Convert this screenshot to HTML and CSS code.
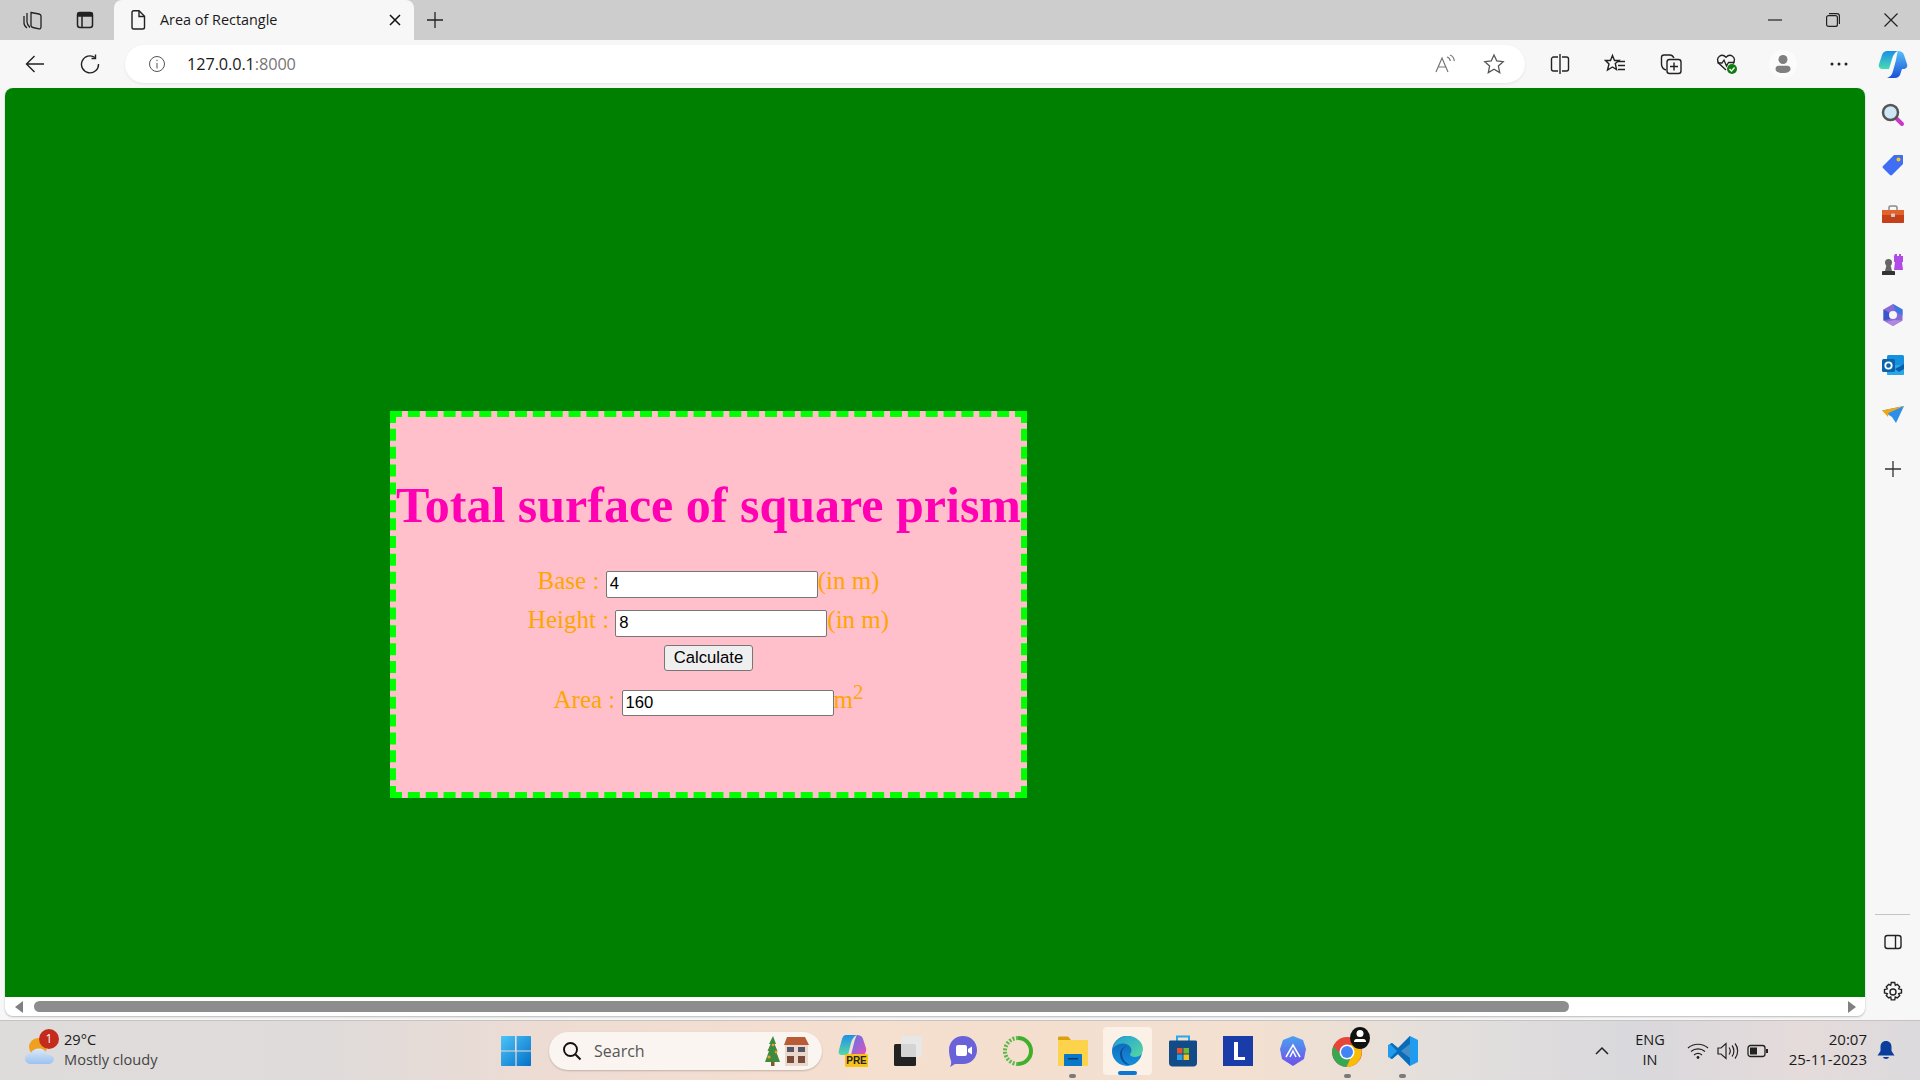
FILE: index.html
```html
<!DOCTYPE html>
<html lang="en">
<head>
    <meta charset="UTF-8">
    <title>Area of Rectangle</title>
    <link rel="stylesheet" href="styles.css">
</head>
<body>

    <!-- tab strip -->
    <div class="tabstrip">
        <span class="strip-btn first">
            <svg width="22" height="22" viewBox="0 0 22 22" fill="none" stroke="#222" stroke-width="1.3"><path d="M2 7v7c0 2.500 1.500 4 3 5"/><path d="M5 4v9c0 2 1.500 4 3 5.500"/><path d="M9 3.500l8 1.500c1 .2 2 1 2 2v11c0 1.300-1 2-2 1.800l-6-1.300c-1-.2-2-1-2-2z"/></svg>
        </span>
        <span class="strip-btn">
            <svg width="20" height="20" viewBox="0 0 20 20" fill="none" stroke="#222" stroke-width="1.5"><rect x="2.500" y="2.500" width="15" height="15" rx="2.500"/><path d="M3 3.500h14v2.500H3z" fill="#222"/><path d="M7 6v11"/></svg>
        </span>
        <div class="tab">
            <svg width="18" height="22" viewBox="0 0 18 22" fill="none" stroke="#222" stroke-width="1.4"><path d="M3 3.500c0-1 .8-1.800 1.800-1.800H10l5.500 5.500v11c0 1-.8 1.800-1.800 1.800H4.800C3.800 20 3 19.200 3 18.200z"/><path d="M10 2v5.500h5.500"/></svg>
            <span class="tab-title">Area of Rectangle</span>
            <svg class="tab-close" width="12" height="12" viewBox="0 0 12 12" stroke="#111" stroke-width="1.500"><path d="M1 1l10 10M11 1L1 11"/></svg>
        </div>
        <svg class="new-tab" width="18" height="18" viewBox="0 0 18 18" stroke="#222" stroke-width="1.300"><path d="M9 1v16M1 9h16"/></svg>
        <div class="window-btns">
            <svg width="14" height="14" viewBox="0 0 14 14" stroke="#222" stroke-width="1.200"><path d="M0 7h14"/></svg>
            <svg width="14" height="14" viewBox="0 0 14 14" fill="none" stroke="#222" stroke-width="1.200"><rect x=".6" y="2.600" width="10.800" height="10.800" rx="2"/><path d="M3 .6h8c1.400 0 2.400 1 2.400 2.400v8"/></svg>
            <svg width="14" height="14" viewBox="0 0 14 14" stroke="#222" stroke-width="1.200"><path d="M.5.5l13 13M13.500.5l-13 13"/></svg>
        </div>
    </div>

    <!-- address bar row -->
    <div class="toolbar">
        <svg class="tool-back" width="20" height="20" viewBox="0 0 20 20" fill="none" stroke="#222" stroke-width="1.400"><path d="M19 10H1.500M9.500 2l-8 8 8 8"/></svg>
        <svg class="tool-reload" width="20" height="20" viewBox="0 0 20 20" fill="none" stroke="#222" stroke-width="1.400"><path d="M15 3.500A8.500 8.500 0 1 0 18.500 10"/><path d="M15.500.5v4h-4"/></svg>
        <div class="address">
            <svg width="18" height="18" viewBox="0 0 18 18" fill="none" stroke="#555" stroke-width="1"><circle cx="9" cy="9" r="7.500"/><path d="M9 8v5.500M9 4.800v1.400"/></svg>
            <span class="url">127.0.0.1<span class="port">:8000</span></span>
            <svg class="read-aloud" width="22" height="20" viewBox="0 0 22 20" fill="none" stroke="#777" stroke-width="1.200"><path d="M1 18L7 4l6 14M3.200 13h7.600"/><path d="M12 3c2 .5 3 2 3.300 4M15 1c2.500 1 4 3 4.300 6"/></svg>
            <svg class="addr-star" width="22" height="22" viewBox="0 0 22 22" fill="none" stroke="#555" stroke-width="1.300"><path d="M11 2l2.800 6 6.400.7-4.800 4.400 1.300 6.500L11 16.300l-5.700 3.300 1.300-6.500L1.800 8.700 8.200 8z"/></svg>
        </div>
        <div class="tool-icons">
            <svg width="20" height="22" viewBox="0 0 20 22" fill="none" stroke="#222" stroke-width="1.400"><path d="M8 4H3.500C2.500 4 1.500 5 1.500 6v10c0 1 1 2 2 2H8M12 4h4.500c1 0 2 1 2 2v10c0 1-1 2-2 2H12M10 1v20"/></svg>
            <svg width="22" height="22" viewBox="0 0 22 22" fill="none" stroke="#222" stroke-width="1.400"><path d="M8.500 2.500l2 5H15l-3.700 3 1.200 6-4-2.500-5 3 1.500-6L1.500 7.500H6.500z"/><path d="M14 8.500h7M14 12.500h7M14 16.500h7"/></svg>
            <svg width="22" height="22" viewBox="0 0 22 22" fill="none" stroke="#222" stroke-width="1.400"><path d="M6 17C3 16 1.500 14 1.500 11V4.500c0-1.500 1-2.500 2.500-2.500h6c2 0 3 1 4 3"/><rect x="7" y="6.500" width="14" height="14" rx="2.500"/><path d="M14 9.500v8M10 13.500h8"/></svg>
            <svg width="22" height="22" viewBox="0 0 22 22"><path d="M10 17L3 10.500C1 8 1 5 3.500 3.200c2-1.400 4.500-1 6.500 1 2-2 4.500-2.400 6.500-1C19 5 19 8 17 10.500" fill="none" stroke="#222" stroke-width="1.400"/><path d="M1.500 10H6l2-3 2.500 6 2-3.500h6" fill="none" stroke="#222" stroke-width="1.300"/><circle cx="16" cy="16" r="5" fill="#107c10"/><path d="M13.500 16l2 2 3-3.500" fill="none" stroke="#fff" stroke-width="1.300"/></svg>
            <span class="profile">
                <svg width="20" height="20" viewBox="0 0 20 20" fill="#7f7f7f"><circle cx="10" cy="5.500" r="4.500"/><path d="M2.500 15c0-2 1.500-3.200 3-3.200h9c1.500 0 3 1.200 3 3.200 0 2.500-3 4-7.500 4s-7.500-1.500-7.500-4z"/></svg>
            </span>
            <svg width="22" height="22" viewBox="0 0 22 22" fill="#222"><circle cx="4" cy="11" r="1.500"/><circle cx="11" cy="11" r="1.500"/><circle cx="18" cy="11" r="1.500"/></svg>
            <svg class="copilot" width="30" height="28" viewBox="0 0 30 28">
                <defs>
                    <linearGradient id="cop1" x1="0" y1="0" x2="0" y2="1"><stop offset="0" stop-color="#1a8fe8"/><stop offset="1" stop-color="#48dcb0"/></linearGradient>
                    <linearGradient id="cop2" x1="0" y1="0" x2="0" y2="1"><stop offset="0" stop-color="#58c0f8"/><stop offset="1" stop-color="#1a50d8"/></linearGradient>
                </defs>
                <path d="M9 1h11c-3 1-5 4-6 8l-3 10H5c-3 0-5-2-4-5l3-9c1-3 3-4 5-4z" fill="url(#cop1)"/>
                <path d="M20 1c3 0 5 1 6 4l3 9c1 3-1 5-4 5h-1l-2 6c-1 2-3 3-5 3H9c3-1 5-3 6-7l3-11c.5-2 1-7 2-9z" fill="url(#cop2)"/>
            </svg>
        </div>
    </div>

    <div class="main">
        <div class="viewport">
            <div class="page">
                <div class="calc-box">
                    <h1>Total surface of square prism</h1>
                    <div class="calc-row">Base : <input class="calc-input" type="text" value="4">(in m)</div>
                    <div class="calc-row">Height : <input class="calc-input" type="text" value="8">(in m)</div>
                    <button class="calc-btn" type="button">Calculate</button>
                    <div class="calc-row result">Area : <input class="calc-input short" type="text" value="160">m<sup>2</sup></div>
                </div>
            </div>
            <div class="hscroll">
                <span class="arrow-left"></span>
                <span class="thumb"></span>
                <span class="arrow-right"></span>
            </div>
        </div>

        <div class="sidebar">
            <svg width="24" height="24" viewBox="0 0 24 24"><path d="M14 14l7 7" stroke="#c838c8" stroke-width="4" stroke-linecap="round"/><circle cx="9.500" cy="9.500" r="7.500" fill="#cfe6f5" stroke="#555" stroke-width="2.500"/></svg>
            <svg width="24" height="24" viewBox="0 0 24 24"><path d="M13 2h8c.6 0 1 .4 1 1v8L11 22c-.6.6-1.400.6-2 0l-7-7c-.6-.6-.6-1.400 0-2z" fill="#3f6ef5"/><circle cx="17.500" cy="6.500" r="2" fill="#f5c518"/></svg>
            <svg width="24" height="24" viewBox="0 0 24 24"><path d="M8 7V4.500C8 3.500 9 3 10 3h4c1 0 2 .5 2 1.500V7" fill="none" stroke="#8c8c8c" stroke-width="1.500"/><path d="M1 7h22v5H1z" fill="#e2622a"/><path d="M1 12h22v7c0 .6-.4 1-1 1H2c-.6 0-1-.4-1-1z" fill="#c4401a"/><rect x="10" y="10.500" width="4" height="3.500" rx=".8" fill="#ccc"/></svg>
            <svg width="24" height="24" viewBox="0 0 24 24"><path d="M14 1h2v2h2V1h2v2h2v6h-1l1 8h-9l1-8h-1V3z" fill="#b04be8"/><circle cx="7.500" cy="9.500" r="3.500" fill="#666"/><path d="M5.500 12h4l1.500 6H4z" fill="#666"/><path d="M2 18h11c.5 0 1 .5 1 1v3H1v-3c0-.5.5-1 1-1z" fill="#333"/></svg>
            <svg width="24" height="24" viewBox="0 0 24 24"><path d="M12 1l9.500 5.500v11L12 23l-9.500-5.500v-11z" fill="#8a6ad8"/><path d="M12 1l9.500 5.500v6L15 9z" fill="#3a7ae0"/><path d="M2.500 6.500L9 10v6l-6.500 1.500z" fill="#3a55c8"/><path d="M21.500 17.500L12 23l-7-4 8-2z" fill="#b088e0"/><circle cx="12" cy="12" r="4" fill="#f7f7f7"/></svg>
            <svg width="24" height="24" viewBox="0 0 24 24"><rect x="6" y="2" width="17" height="14" rx="1.500" fill="#1490df"/><path d="M6 12h17v9c0 .6-.4 1-1 1H7c-.6 0-1-.4-1-1z" fill="#28a8ea"/><path d="M14 16l9-5v5l-5 3z" fill="#0a5ea8"/><rect x="1" y="6" width="13" height="13" rx="1.500" fill="#0a64ad"/><circle cx="7.500" cy="12.500" r="3.200" fill="none" stroke="#fff" stroke-width="1.800"/></svg>
            <svg width="24" height="24" viewBox="0 0 24 24"><path d="M1 7.500L23 3l-8 17-4-6z" fill="#2e8fe8"/><path d="M1 7.500L23 3 7.500 10l-.5 4z" fill="#f0a818"/></svg>
            <svg class="side-plus" width="16" height="16" viewBox="0 0 16 16" stroke="#333" stroke-width="1.300"><path d="M8 0v16M0 8h16"/></svg>
            <span class="side-rule"></span>
            <svg width="20" height="18" viewBox="0 0 20 18" fill="none" stroke="#222" stroke-width="1.400"><rect x="2" y="2.500" width="16" height="13" rx="2.500"/><path d="M12.500 2.500v13"/></svg>
            <svg class="side-gear" width="22" height="22" viewBox="0 0 22 22" fill="none" stroke="#222" stroke-width="1.400"><circle cx="11" cy="11" r="3"/><path d="M9.300 1.500h3.400l.6 2.800 2-.9 2.400 2.400-1 2 2.800.7v3.400l-2.800.7 1 2-2.400 2.400-2-1-.6 2.900H9.300l-.6-2.900-2 1-2.400-2.400 1-2-2.800-.7V8.500l2.800-.7-1-2 2.400-2.400 2 .9z"/></svg>
        </div>
    </div>

    <!-- windows taskbar -->
    <div class="taskbar">
        <div class="weather">
            <svg class="weather-icon" width="34" height="36" viewBox="0 0 34 36">
                <defs><linearGradient id="cloud" x1="0" y1="0" x2="0" y2="1"><stop offset="0" stop-color="#dbe8f8"/><stop offset="1" stop-color="#9cc2f0"/></linearGradient></defs>
                <circle cx="14" cy="14" r="9" fill="#f0a020"/>
                <path d="M7 31c-4 0-6-2.500-6-5.500S3.500 20 7 20c1.500-3 4-4.500 8-4.500s7 2.500 8 6c3.500 0 7 1.500 7 4.500s-3 5-6 5z" fill="url(#cloud)"/>
            </svg>
            <span class="weather-badge">1</span>
            <div class="weather-text">
                <span class="temp">29°C</span>
                <span class="cond">Mostly cloudy</span>
            </div>
        </div>
        <svg class="start" width="30" height="30" viewBox="0 0 30 30">
            <defs><linearGradient id="win" x1="0" y1="0" x2="1" y2="1"><stop offset="0" stop-color="#4cc4f8"/><stop offset="1" stop-color="#0470c8"/></linearGradient></defs>
            <path d="M0 1c0-.6.4-1 1-1h13v14.400H0zM15.600 0H29c.6 0 1 .4 1 1v13.400H15.600zM0 15.600h14.400V30H1c-.6 0-1-.4-1-1zM15.600 15.600H30V29c0 .6-.4 1-1 1H15.600z" fill="url(#win)"/>
        </svg>
        <div class="search">
            <svg width="20" height="20" viewBox="0 0 20 20" fill="none" stroke="#111" stroke-width="1.900"><circle cx="8.500" cy="8.500" r="6.500"/><path d="M13.500 13.500l5 5"/></svg>
            <span class="search-text">Search</span>
            <svg class="search-art" width="44" height="30" viewBox="0 0 44 30">
                <path d="M8 0l3 8H9.500l3 7H11l4 11H0l4-11H2.500l3-7H4z" fill="#3f8a3f"/><rect x="6" y="26" width="3.500" height="4" fill="#7a5a30"/>
                <circle cx="4" cy="21" r="1.600" fill="#e8a020"/><circle cx="11" cy="16" r="1.400" fill="#e8a020"/><circle cx="8" cy="9" r="1.300" fill="#e8a020"/>
                <path d="M19 9l3-8h18l4 8z" fill="#b85c38"/><rect x="20" y="9" width="23" height="21" fill="#ead8cc"/>
                <rect x="22" y="11" width="7" height="5" fill="#556"/><rect x="33" y="11" width="7" height="5" fill="#556"/>
                <rect x="22" y="20" width="7" height="7" fill="#7a4a3a"/><rect x="33" y="20" width="7" height="7" fill="#7a4a3a"/>
            </svg>
        </div>
        <div class="apps">
            <span class="app">
                <svg width="30" height="34" viewBox="0 0 30 34">
                    <defs>
                        <linearGradient id="pre1" x1="0" y1="0" x2="0" y2="1"><stop offset="0" stop-color="#1f90e8"/><stop offset="1" stop-color="#58d8a8"/></linearGradient>
                        <linearGradient id="pre2" x1="0" y1="0" x2="1" y2="1"><stop offset="0" stop-color="#5078f0"/><stop offset="1" stop-color="#e850b8"/></linearGradient>
                    </defs>
                    <path d="M8 1h11c-3 1-5 4-6 8l-3 12H4c-3 0-4-2-3-5l3-11c1-3 2-4 4-4z" fill="url(#pre1)"/>
                    <path d="M19 1c3 0 5 1 6 4l3 9c.5 2 0 6-3 7H13l3-12c.5-2 2-7 3-8z" fill="url(#pre2)"/>
                    <rect x="7" y="20" width="23" height="13" rx="1.500" fill="#f8c218"/>
                    <text x="18.500" y="30" class="pre-text">PRE</text>
                </svg>
            </span>
            <span class="app">
                <svg width="30" height="32" viewBox="0 0 30 32"><rect x="1" y="9" width="22" height="22" rx="1.500" fill="#222"/><rect x="8" y="1" width="21" height="21" rx="1" fill="#e8e8e8" fill-opacity=".9"/></svg>
            </span>
            <span class="app">
                <svg width="30" height="32" viewBox="0 0 30 32"><path d="M15 1c8 0 14 6 14 14s-6 14-14 14H7l-5 3c1-2 1.500-4 1-6C2 23 1 19 1 15 1 7 7 1 15 1z" fill="#6a62d8"/><rect x="8" y="10" width="11" height="11" rx="2" fill="#fff"/><path d="M20 14l4-2.500v8L20 17z" fill="#fff"/></svg>
            </span>
            <span class="app">
                <svg width="32" height="32" viewBox="0 0 32 32" fill="none"><path d="M16 3a13 13 0 0 1 0 26" stroke="#3fb02a" stroke-width="4"/><path d="M16 29A13 13 0 0 1 16 3" stroke="#5cb84a" stroke-width="4" stroke-dasharray="2 1.500"/></svg>
            </span>
            <span class="app has-dot">
                <svg width="30" height="30" viewBox="0 0 30 30"><path d="M0 2c0-1 .6-1.500 1.500-1.500H10L13 4H0z" fill="#dba010"/><rect y="4" width="30" height="26" rx="1" fill="#fcd34a"/><path d="M6 19c0-.6.4-1 1-1h16c.6 0 1 .4 1 1v11H6z" fill="#0a78c8"/><rect x="10" y="22" width="10" height="1.500" fill="#063a68"/></svg>
            </span>
            <span class="app active">
                <svg width="32" height="32" viewBox="0 0 32 32">
                    <defs>
                        <linearGradient id="edge1" x1="0" y1="0" x2="1" y2="1"><stop offset="0" stop-color="#1f9fd8"/><stop offset="1" stop-color="#58d8a0"/></linearGradient>
                        <linearGradient id="edge2" x1="0" y1="0" x2="0" y2="1"><stop offset="0" stop-color="#0f62b0"/><stop offset="1" stop-color="#1490df"/></linearGradient>
                    </defs>
                    <circle cx="15" cy="16" r="15" fill="url(#edge2)"/>
                    <path d="M1 13C3 5 9 1 16 1c8 0 15 6 15 13 0 5-3.500 8-8 8-3 0-5-1-5-2.500 0-1 1.500-1.500 1.500-4 0-4-4-7-8-7-5 0-8 2-10.500 4.500z" fill="url(#edge1)"/>
                    <path d="M17 11c-4 0-7 3-7 7 0 5 3 10 8 12-6 0-10-5-10-11 0-5 4-8 9-8z" fill="#0b4f9a"/>
                </svg>
                <span class="active-bar"></span>
            </span>
            <span class="app">
                <svg width="30" height="32" viewBox="0 0 30 32"><path d="M9 6V1.500h12V6" fill="none" stroke="#28a8e8" stroke-width="2"/><path d="M1 7c0-1 .6-1.500 1.500-1.500h25c.9 0 1.500.5 1.500 1.500v21c0 2-1.500 3.500-3.500 3.500h-21C2.500 31.500 1 30 1 28z" fill="#134a88"/><rect x="9" y="13" width="5.500" height="5.500" fill="#e8502a"/><rect x="15.500" y="13" width="5.500" height="5.500" fill="#70b830"/><rect x="9" y="19.500" width="5.500" height="5.500" fill="#28a0e8"/><rect x="15.500" y="19.500" width="5.500" height="5.500" fill="#f8c018"/></svg>
            </span>
            <span class="app">
                <svg width="30" height="30" viewBox="0 0 30 30"><rect width="30" height="30" fill="#1a3ca8"/><path d="M11 6h4v15h7v3H11z" fill="#fff"/></svg>
            </span>
            <span class="app">
                <svg width="28" height="32" viewBox="0 0 28 32">
                    <defs><linearGradient id="shield" x1="0" y1="0" x2="0" y2="1"><stop offset="0" stop-color="#4aa0f0"/><stop offset="1" stop-color="#7050e8"/></linearGradient></defs>
                    <path d="M14 1l10 4 3 9-2 10-11 7L3 24 1 14l3-9z" fill="url(#shield)"/>
                    <path d="M7 22l7-12 7 12M11 22l3-6 3 6" fill="none" stroke="#fff" stroke-width="1.500"/>
                </svg>
            </span>
            <span class="app has-dot">
                <svg width="32" height="32" viewBox="0 0 32 32">
                    <circle cx="15" cy="17" r="15" fill="#e8453a"/>
                    <path d="M1.500 11a15 15 0 0 0 13 21l6-11H10z" fill="#34a853"/>
                    <path d="M14.500 32A15 15 0 0 0 28 10H15l5 10z" fill="#fbbc05"/>
                    <circle cx="15" cy="17" r="7.500" fill="#fff"/><circle cx="15" cy="17" r="6" fill="#4285f4"/>
                </svg>
                <span class="chrome-badge">
                    <svg width="20" height="20" viewBox="0 0 20 20" fill="#fff"><circle cx="10" cy="6.500" r="3.500"/><path d="M4 15c0-2 1-3 2.500-3h7c1.500 0 2.500 1 2.500 3z"/></svg>
                </span>
            </span>
            <span class="app has-dot">
                <svg width="30" height="30" viewBox="0 0 30 30"><path d="M22 0l8 4v22l-8 4-12-12-6 5-4-2V9l4-2 6 5z" fill="#1f9cf0"/><path d="M22 0L10 12 4 7 2 8l7 7-7 7 2 1 6-5 12 12z" fill="#0a6cb8"/><path d="M22 8v14l-9-7z" fill="#f2f2f2" fill-opacity=".25"/></svg>
            </span>
        </div>
        <div class="tray">
            <svg class="tray-chevron" width="14" height="10" viewBox="0 0 14 10" fill="none" stroke="#222" stroke-width="1.500"><path d="M1 8l6-6 6 6"/></svg>
            <div class="lang">ENG<br>IN</div>
            <svg width="22" height="18" viewBox="0 0 22 18" fill="none" stroke="#222" stroke-width="1.200"><path d="M1 6c5.500-5 14.500-5 20 0M4 9.500c4-3.500 10-3.500 14 0M7 13c2.500-2 5.500-2 8 0"/><circle cx="11" cy="15.500" r="1.400" fill="#222" stroke="none"/></svg>
            <svg width="22" height="18" viewBox="0 0 22 18" fill="none" stroke="#222" stroke-width="1.200"><path d="M1 6h3l5-4.500v15L4 12H1z"/><path d="M12 5.500c1.500 2 1.500 5 0 7M15 3.500c2.500 3 2.500 8 0 11M18 1.500c3.500 4 3.500 11 0 15"/></svg>
            <svg width="22" height="14" viewBox="0 0 22 14" fill="none" stroke="#222" stroke-width="1.300"><rect x="1" y="1.500" width="17" height="11" rx="2.500"/><rect x="3" y="3.500" width="7" height="7" fill="#222" stroke="none"/><path d="M20 5v4" stroke-width="2"/></svg>
            <div class="clock">20:07<br>25-11-2023</div>
            <svg class="bell" width="18" height="20" viewBox="0 0 18 20" fill="#0b3d9c"><path d="M9 0c3.500 0 5.500 2.500 5.500 6v4l3 4.500H.5l3-4.500V6C3.500 2.500 5.500 0 9 0z"/><path d="M6 16h6c-.5 2.500-5.500 2.500-6 0z"/></svg>
        </div>
    </div>

</body>
</html>
```

FILE: styles.css
```css
html, body {
    margin: 0;
    height: 100%;
    overflow: hidden;
}

body {
    width: 1920px;
    height: 1080px;
    display: flex;
    flex-direction: column;
    background-color: #f7f7f7;
    font-family: "Open Sans", "Noto Sans", sans-serif;
    color: #1a1a1a;
}

svg {
    flex: none;
    display: block;
}

/* tab strip */
.tabstrip {
    height: 40px;
    flex: none;
    display: flex;
    align-items: center;
    background-color: #cdcdcd;
}

.strip-btn {
    width: 52px;
    display: flex;
    justify-content: center;
}

.strip-btn.first {
    margin-left: 7px;
}

.tab {
    width: 300px;
    height: 40px;
    margin-left: 3px;
    box-sizing: border-box;
    padding-left: 15px;
    padding-right: 13px;
    display: flex;
    align-items: center;
    background-color: #f7f7f7;
    border-radius: 8px 8px 0 0;
}

.tab-title {
    margin-left: 13px;
    margin-bottom: 2px;
    font-size: 14.4px;
}

.tab-close {
    margin-left: auto;
}

.new-tab {
    margin-left: 12px;
}

.window-btns {
    margin-left: auto;
    margin-right: 22px;
    display: flex;
    gap: 44px;
}

/* toolbar */
.toolbar {
    height: 48px;
    flex: none;
    display: flex;
    align-items: center;
}

.tool-back {
    margin-left: 25px;
}

.tool-reload {
    margin-left: 35px;
}

.address {
    width: 1400px;
    height: 38px;
    margin-left: 25px;
    box-sizing: border-box;
    padding-left: 23px;
    padding-right: 20px;
    display: flex;
    align-items: center;
    background-color: white;
    border-radius: 19px;
    box-shadow: 0 1px 3px rgba(0, 0, 0, 0.08);
}

.url {
    margin-left: 21px;
    font-size: 16.3px;
    letter-spacing: -0.1px;
}

.port {
    color: #767676;
}

.read-aloud {
    margin-left: auto;
}

.addr-star {
    margin-left: 26px;
}

.tool-icons {
    margin-left: 25px;
    display: flex;
    align-items: center;
    gap: 34px;
}

.profile {
    width: 28px;
    height: 28px;
    margin: 0 -3px;
    display: flex;
    align-items: center;
    justify-content: center;
    background-color: #fbfbfb;
    border-radius: 50%;
}

.copilot {
    margin-left: -6px;
}

/* page area */
.main {
    flex: 1;
    display: flex;
    min-height: 0;
}

.viewport {
    width: 1860px;
    height: 928px;
    margin-left: 5px;
    display: flex;
    flex-direction: column;
    background-color: white;
    border-radius: 8px;
    overflow: hidden;
    box-shadow: 0 1px 2px rgba(0, 0, 0, 0.25);
}

.page {
    height: 909px;
    flex: none;
    box-sizing: border-box;
    padding: 323px 0 0 385px;
    background-color: green;
}

.calc-box {
    width: 637px;
    height: 387px;
    box-sizing: border-box;
    border: 6px dashed lime;
    background-color: pink;
    font-family: "Liberation Serif", "Times New Roman", serif;
    font-size: 25px;
    color: orange;
    text-align: center;
}

.calc-box h1 {
    margin: 56px 0 30px;
    font-size: 50px;
    line-height: 64px;
    color: #ff00b3;
    white-space: nowrap;
}

.calc-row {
    height: 39px;
}

.calc-input {
    width: 212px;
    height: 27px;
    box-sizing: border-box;
    padding: 1px 3px;
    border: 1px solid #767676;
    border-radius: 2px;
    font-family: "Liberation Sans", Arial, sans-serif;
    font-size: 16.67px;
}

.calc-input.short {
    height: 26px;
}

.calc-btn {
    display: block;
    width: 89px;
    height: 26px;
    margin: 0 auto;
    padding: 0;
    background-color: #efefef;
    border: 1px solid #767676;
    border-radius: 3px;
    font-family: "Liberation Sans", Arial, sans-serif;
    font-size: 16.67px;
}

.result {
    margin-top: 15px;
}

.result sup {
    font-size: 20.8px;
    line-height: 0;
}

/* bottom scrollbar of the page */
.hscroll {
    height: 19px;
    display: flex;
    align-items: center;
    padding: 0 9px 0 10px;
}

.thumb {
    width: 1535px;
    height: 11px;
    margin-left: 11px;
    background-color: #8d8d8d;
    border-radius: 6px;
}

.arrow-left {
    width: 0;
    height: 0;
    border-top: 6px solid transparent;
    border-bottom: 6px solid transparent;
    border-right: 8px solid #808080;
}

.arrow-right {
    width: 0;
    height: 0;
    margin-left: auto;
    border-top: 6px solid transparent;
    border-bottom: 6px solid transparent;
    border-left: 8px solid #808080;
}

/* edge sidebar */
.sidebar {
    width: 55px;
    display: flex;
    flex-direction: column;
    align-items: center;
    gap: 26px;
    padding-top: 15px;
    box-sizing: border-box;
}

.side-plus {
    margin-top: 8px;
}

.side-rule {
    width: 35px;
    height: 1px;
    margin-top: auto;
    margin-bottom: -8px;
    background-color: #c4c4c4;
}

.side-gear {
    margin-top: 4px;
    margin-bottom: 17px;
}

/* taskbar */
.taskbar {
    height: 59px;
    flex: none;
    display: flex;
    align-items: center;
    border-top: 1px solid #c6c4c2;
    background: linear-gradient(90deg, #dedcda 0%, #dfdbda 17%, #efdcd3 30%, #f5dfcf 45%, #f3e0d0 65%, #e2dfdd 76%, #d9d8dc 85%, #e5dbdb 94%, #dcdadd 100%);
}

.weather {
    width: 466px;
    margin-left: 24px;
    display: flex;
    align-items: center;
    flex: none;
    position: relative;
}

.weather-badge {
    position: absolute;
    left: 15px;
    top: -3px;
    width: 20px;
    height: 20px;
    background-color: #c42b1c;
    border-radius: 50%;
    color: white;
    font-size: 12px;
    line-height: 20px;
    text-align: center;
}

.weather-text {
    margin-left: 6px;
    margin-top: -3px;
    display: flex;
    flex-direction: column;
    font-size: 14.6px;
    line-height: 20px;
}

.cond {
    color: #444;
}

.start {
    margin-left: 11px;
}

.search {
    width: 273px;
    height: 38px;
    margin-left: 18px;
    box-sizing: border-box;
    padding: 0 13px 0 13px;
    display: flex;
    align-items: center;
    background-color: #fbf5f1;
    border-radius: 19px;
    box-shadow: 0 1px 2px rgba(0, 0, 0, 0.2);
}

.search-text {
    margin-left: 12px;
    font-size: 16px;
    color: #555;
}

.search-art {
    margin-left: auto;
}

.apps {
    margin-left: 3px;
    display: flex;
}

.app {
    width: 55px;
    height: 48px;
    display: flex;
    align-items: center;
    justify-content: center;
    position: relative;
    border-radius: 4px;
}

.app.active {
    width: 49px;
    margin: 0 3px;
    background-color: #fbf1e6;
}

.has-dot::after {
    content: "";
    position: absolute;
    left: 24px;
    bottom: -3px;
    width: 7px;
    height: 4px;
    background-color: #7a7a7a;
    border-radius: 2px;
}

.active-bar {
    position: absolute;
    left: 15px;
    bottom: 0;
    width: 19px;
    height: 4px;
    background-color: #0a78d4;
    border-radius: 2px;
}

.chrome-badge {
    position: absolute;
    right: 5px;
    top: 0;
    width: 20px;
    height: 22px;
    background-color: #111;
    border-radius: 50%;
}

.pre-text {
    font-family: "Liberation Sans", Arial, sans-serif;
    font-size: 10px;
    font-weight: bold;
    text-anchor: middle;
    fill: #222;
}

.tray {
    margin-left: auto;
    margin-right: 25px;
    display: flex;
    align-items: center;
    gap: 8px;
}

.tray-chevron {
    margin-right: 18px;
}

.lang {
    margin-right: 14px;
    margin-bottom: 2px;
    font-size: 14.5px;
    line-height: 20px;
    text-align: center;
}

.clock {
    margin-left: 12px;
    margin-bottom: 4px;
    font-size: 15px;
    line-height: 20px;
    text-align: right;
}

.bell {
    margin-left: 2px;
}
```
